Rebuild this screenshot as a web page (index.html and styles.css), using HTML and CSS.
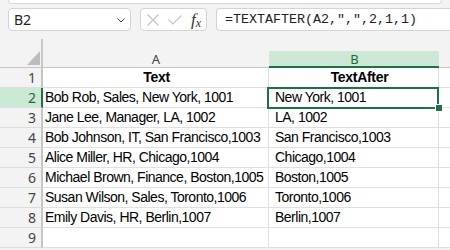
FILE: index.html
```
<!DOCTYPE html>
<html>
<head>
<meta charset="utf-8">
<link rel="stylesheet" href="styles.css">
</head>
<body>
<div class="topstrip"></div>
<div class="fbar">
  <div class="namebox"><span class="nb-text">B2</span>
    <svg class="chev" width="8" height="5" viewBox="0 0 8 5"><path d="M0.5 0.5 L4 4 L7.5 0.5" fill="none" stroke="#444" stroke-width="1"/></svg>
  </div>
  <div class="fxbox">
    <svg width="12" height="12" viewBox="0 0 12 12"><path d="M0.5 0.5 L11.5 11.5 M11.5 0.5 L0.5 11.5" stroke="#c4c4c4" stroke-width="1.2" fill="none"/></svg>
    <svg width="14" height="10" viewBox="0 0 14 10"><path d="M0.5 4.5 L5 9 L13.5 0.5" stroke="#c4c4c4" stroke-width="1.2" fill="none"/></svg>
    <span class="fx"><i>f</i><sub>x</sub></span>
  </div>
  <div class="formula">=TEXTAFTER(A2,",",2,1,1)</div>
</div>
<div class="sheet">
  <div class="hrow">
    <div class="corner"><svg class="tri" width="13" height="14" viewBox="0 0 13 14"><path d="M13 0 L13 14 L0 14 Z" fill="#bcbcbc"/></svg></div>
    <div class="ch cha"><span>A</span></div>
    <div class="ch chb sel"><span>B</span></div>
    <div class="ch chc"></div>
  </div>
  <div class="row"><div class="rh">1</div><div class="c ca b hd">Text</div><div class="c cb b hd">TextAfter</div><div class="c cc"></div></div>
  <div class="row"><div class="rh rsel">2</div><div class="c ca">Bob Rob, Sales, New York, 1001</div><div class="c cb active">New York, 1001<div class="outline"><div class="handle"></div></div></div><div class="c cc"></div></div>
  <div class="row"><div class="rh">3</div><div class="c ca">Jane Lee, Manager, LA, 1002</div><div class="c cb">LA, 1002</div><div class="c cc"></div></div>
  <div class="row"><div class="rh">4</div><div class="c ca">Bob Johnson, IT, San Francisco,1003</div><div class="c cb">San Francisco,1003</div><div class="c cc"></div></div>
  <div class="row"><div class="rh">5</div><div class="c ca">Alice Miller, HR, Chicago,1004</div><div class="c cb">Chicago,1004</div><div class="c cc"></div></div>
  <div class="row"><div class="rh">6</div><div class="c ca">Michael Brown, Finance, Boston,1005</div><div class="c cb">Boston,1005</div><div class="c cc"></div></div>
  <div class="row"><div class="rh">7</div><div class="c ca">Susan Wilson, Sales, Toronto,1006</div><div class="c cb">Toronto,1006</div><div class="c cc"></div></div>
  <div class="row"><div class="rh">8</div><div class="c ca">Emily Davis, HR, Berlin,1007</div><div class="c cb">Berlin,1007</div><div class="c cc"></div></div>
  <div class="row"><div class="rh">9</div><div class="c ca"></div><div class="c cb"></div><div class="c cc"></div></div>
</div>
</body>
</html>
```
FILE: styles.css
```
* { box-sizing: border-box; }
html, body { margin: 0; padding: 0; }
body {
  width: 450px;
  height: 250px;
  overflow: hidden;
  background: #f3f3f3;
  font-family: "Liberation Sans", sans-serif;
}
.topstrip {
  margin: 0 8px;
  height: 4px;
  background: #fff;
  border: 1px solid #d9d9d9;
  border-top: none;
  border-radius: 0 0 6px 6px;
}
.fbar {
  display: flex;
  gap: 9px;
  padding: 4px 0 0 8px;
  height: 35px;
  overflow: hidden;
}
.namebox, .fxbox, .formula {
  height: 23px;
  background: #fff;
  border: 1px solid #d4d4d4;
  border-radius: 4px;
  display: flex;
  align-items: center;
}
.namebox {
  width: 123px;
  flex: none;
  padding: 0 5px;
  justify-content: space-between;
}
.nb-text {
  font-family: "Noto Sans", sans-serif;
  font-size: 14px;
  color: #222;
}
.chev { margin-top: 1px; }
.fxbox {
  width: 67px;
  flex: none;
  padding: 0 4px 0 6px;
  gap: 9px;
}
.fx {
  font-family: "Liberation Serif", serif;
  font-size: 17px;
  color: #333;
  line-height: 1;
}
.fx sub { font-size: 12px; font-style: italic; vertical-align: -2px; }
.formula {
  flex: 1;
  min-width: 0;
  padding-left: 8px;
  font-family: "Liberation Mono", monospace;
  font-size: 13.33px;
  color: #222;
  border-right: none;
  border-radius: 4px 0 0 4px;
  white-space: nowrap;
}
.sheet { display: flex; flex-direction: column; }
.hrow {
  display: flex;
  height: 29px;
  border-bottom: 1px solid #c6c6c6;
}
.corner {
  width: 43px;
  flex: none;
  border-right: 2px solid #c6c6c6;
  display: flex;
  align-items: flex-end;
  justify-content: flex-end;
  padding: 0 1px 2px 0;
}
.ch {
  align-self: flex-end;
  height: 16px;
  display: flex;
  align-items: center;
  justify-content: center;
  font-family: "Noto Sans", sans-serif;
  font-size: 13px;
  color: #444;
}
.cha { width: 226px; flex: none; }
.chb { width: 170px; flex: none; }
.chc { flex: 1; }
.sel {
  background: #cbe9d5;
  color: #1e6b3e;
  position: relative;
  border-left: 1px solid #d6e8dc;
}
.sel::after {
  content: "";
  position: absolute;
  left: -1px;
  right: 0;
  bottom: -1px;
  height: 2px;
  background: #1e7145;
}
.row { display: flex; height: 20px; }
.rh {
  width: 43px;
  flex: none;
  border-right: 2px solid #c6c6c6;
  border-bottom: 1px solid #dcdcdc;
  text-align: right;
  padding-right: 5px;
  font-family: "Noto Sans", sans-serif;
  font-size: 14px;
  line-height: 19px;
  color: #444;
}
.rsel {
  background: #cbe9d5;
  border-right-color: #1e7145;
  color: #1e6b3e;
}
.c {
  background: #fff;
  border-bottom: 1px solid #e0e0e0;
  border-right: 1px solid #e0e0e0;
  font-family: "Liberation Sans", sans-serif;
  font-size: 14px;
  letter-spacing: -0.5px;
  line-height: 19px;
  color: #000;
  white-space: nowrap;
}
.ca { width: 226px; flex: none; padding-left: 2px; overflow: hidden; }
.cb { width: 170px; flex: none; padding-left: 6px; position: relative; }
.cc { flex: 1; border-right: none; }
.hd { font-weight: bold; text-align: center; letter-spacing: -0.3px; }
.cb.hd { padding-left: 12px; }
.outline {
  position: absolute;
  top: -1px;
  left: -2px;
  right: -1px;
  bottom: -2px;
  border: 2px solid #1e7145;
  z-index: 2;
}
.handle {
  position: absolute;
  left: 167px;
  top: 16px;
  width: 6px;
  height: 6px;
  background: #1e7145;
  box-shadow: 0 0 0 1px #fff;
}
```
